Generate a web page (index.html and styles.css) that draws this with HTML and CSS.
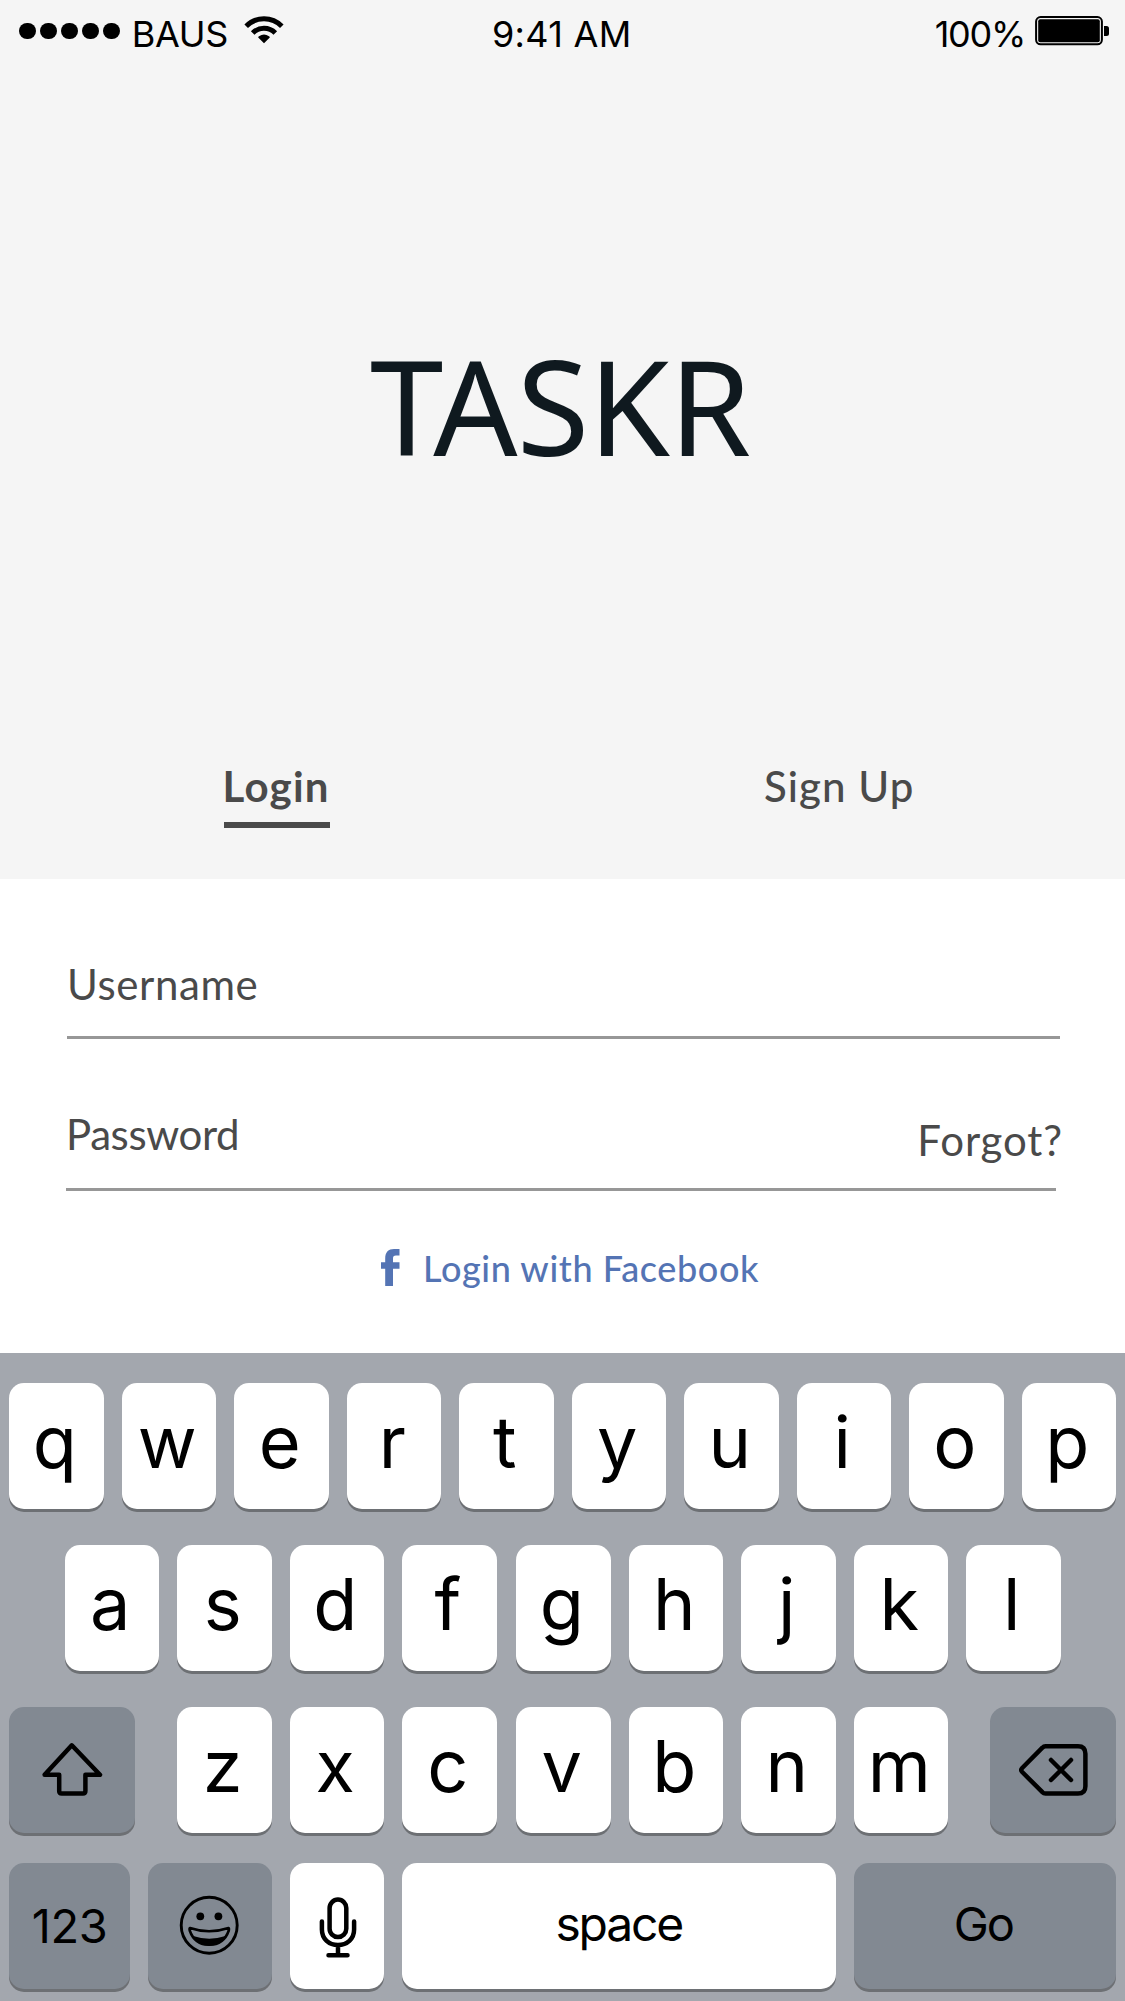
FILE: index.html
```
<!DOCTYPE html>
<html lang="en">
<head>
<meta charset="utf-8">
<title>Taskr</title>
<link rel="stylesheet" href="styles.css">
</head>
<body>
<header class="hero">
  <div class="status">
    <div class="status-left">
      <div class="signal"><i></i><i></i><i></i><i></i><i></i></div>
      <span class="carrier">BAUS</span>
      <svg class="wifi" width="40" height="28" viewBox="0 0 40 28" fill="none" stroke="#000" stroke-width="5">
        <path d="M2.2 10.2a25 25 0 0 1 35.6 0M8.7 17a15.800 15.800 0 0 1 22.6 0"/>
        <path d="M20 27.300l-5.800-5.800q0-.8.800-1.300a8.600 8.600 0 0 1 10 0q.8.500.8 1.300z" fill="#000" stroke="none"/>
      </svg>
    </div>
    <span class="time">9:41 AM</span>
    <div class="status-right">
      <span class="percent">100%</span>
      <svg class="battery" width="75" height="30" viewBox="0 0 75 30">
        <rect x="1.1" y="1.1" width="65.800" height="27.200" rx="4.500" fill="none" stroke="#000" stroke-width="2"/>
        <rect x="3.200" y="3.200" width="61.600" height="23" rx="2"/>
        <path d="M69 10h2.500q2.500 0 2.500 2.500v5q0 2.500-2.500 2.500H69z"/>
      </svg>
    </div>
  </div>
  <h1 class="brand">TASKR</h1>
  <nav class="tabs">
    <a class="tab active">Login</a>
    <a class="tab signup">Sign Up</a>
  </nav>
</header>
<main class="form">
  <div class="field username"><span>Username</span></div>
  <div class="field password"><span>Password</span><a class="forgot">Forgot?</a></div>
  <a class="facebook">
    <svg width="19" height="38" viewBox="0 0 19 38" fill="#5474b4"><path d="M4.200 37V19.700H0v-6.500h4.200V9.500C4.200 3.100 7.500 0 13 0h5.500V6.500h-3.500c-2.300 0-3 1-3 3.200v3.500h6.500v6.500H12v17.300z"/></svg>
    <span>Login with Facebook</span>
  </a>
</main>
<section class="keyboard">
  <div class="row">
    <b class="key">q</b><b class="key">w</b><b class="key">e</b><b class="key">r</b><b class="key">t</b><b class="key">y</b><b class="key">u</b><b class="key">i</b><b class="key">o</b><b class="key">p</b>
  </div>
  <div class="row home">
    <b class="key">a</b><b class="key">s</b><b class="key">d</b><b class="key">f</b><b class="key mid">g</b><b class="key">h</b><b class="key">j</b><b class="key">k</b><b class="key">l</b>
  </div>
  <div class="row lower">
    <b class="key dark shift"><svg width="126" height="126" viewBox="0 0 126 126" fill="none" stroke="#000" stroke-width="4.500" stroke-linejoin="round"><path d="M62.800 38.300L91 67.800H76.400V84Q76.400 86.500 73.900 86.500H52.700Q50.200 86.500 50.200 84V67.800H35.600Z"/></svg></b>
    <b class="key">z</b><b class="key">x</b><b class="key">c</b><b class="key mid">v</b><b class="key">b</b><b class="key">n</b><b class="key">m</b>
    <b class="key dark delete"><svg width="126" height="126" viewBox="0 0 126 126" fill="none" stroke="#000" stroke-width="4.500" stroke-linecap="round" stroke-linejoin="round"><path d="M55.500 39.300H88Q95.400 39.300 95.400 46.700V79.200Q95.400 86.600 88 86.600H55.500Q53.700 86.600 52.400 85.200L32.200 65Q30.300 63 32.200 61L52.400 40.700Q53.700 39.300 55.500 39.300ZM61 53L81 73M81 53L61 73"/></svg></b>
  </div>
  <div class="row bottom">
    <b class="key dark numbers">123</b>
    <b class="key dark"><svg width="123" height="126" viewBox="0 0 123 126"><circle cx="61.200" cy="62.200" r="28" fill="none" stroke="#000" stroke-width="2.900"/><circle cx="52.300" cy="53.300" r="3.900"/><circle cx="70.400" cy="53.300" r="3.900"/><path d="M42 65Q61 71.500 80.500 65Q81.300 65.200 80.800 67.500C77.500 77 71 81.700 61.200 81.700C51.500 81.700 45 77 41.700 67.500Q41.200 65.200 42 65Z" fill="none" stroke="#000" stroke-width="2.600" stroke-linejoin="round"/><path d="M44 72.800Q61.200 78.500 78.500 72.800C74 80 68 82.800 61.200 82.800C54 82.800 48 80 44 72.800Z"/></svg></b>
    <b class="key"><svg width="94" height="126" viewBox="0 0 94 126" fill="none" stroke="#000" stroke-width="4.500" stroke-linecap="round"><rect x="39.600" y="36.600" width="16.700" height="37.500" rx="8.350"/><path d="M31.900 58.500V66.500C31.900 76 39 82 48 82S64.100 76 64.100 66.500V58.500M48 82V92.300M38.500 92.300H57.500"/></svg></b>
    <b class="key space">space</b>
    <b class="key dark go">Go</b>
  </div>
</section>
</body>
</html>
```
FILE: styles.css
```
* { box-sizing: border-box; }
body {
  margin: 0;
  width: 1125px;
  height: 2001px;
  display: flex;
  flex-direction: column;
  overflow: hidden;
  background: #fff;
  color: #4a4a4a;
  font-family: Lato, sans-serif;
}
svg { display: block; flex: none; }

.hero { height: 879px; background: #f5f5f5; }
.status {
  height: 68px;
  padding: 0 15px 0 19px;
  display: grid;
  grid-template-columns: 473px 1fr auto;
  color: #000;
  font: 36px/68px Inter, sans-serif;
}
.status-left, .status-right { display: flex; }
.signal { display: flex; gap: 4.200px; padding-top: 22.500px; }
.signal i { width: 16.800px; height: 16.800px; border-radius: 50%; background: #000; }
.carrier { margin-left: 12px; letter-spacing: -0.300px; }
.wifi { margin: 16px 0 0 16px; }
.time { letter-spacing: 0.300px; }
.percent { letter-spacing: -1.300px; }
.battery { margin: 15.500px 0 0 10px; }

.brand {
  margin: 247px 0 0;
  padding-left: 370px;
  font: 400 132px/180px "Noto Sans", sans-serif;
  letter-spacing: -0.900px;
  color: #0f191f;
}
.tabs {
  margin-top: 266px;
  padding: 0 210.500px 0 223.500px;
  display: flex;
  justify-content: space-between;
}
.tab { font-size: 42px; line-height: 50px; font-weight: 500; letter-spacing: 1.100px; }
.tab.active {
  width: 106px;
  padding-bottom: 11px;
  border-bottom: 6px solid #4a4a4a;
  font-weight: 700;
  letter-spacing: 1.200px;
  text-indent: -1px;
}

.form { height: 474px; padding-top: 80px; font-size: 42px; line-height: 50px; }
.field { display: flex; justify-content: space-between; border-bottom: 3px solid #979797; }
.username { height: 80px; margin: 0 65px 0 67px; letter-spacing: 0.600px; }
.password { height: 82px; margin: 70px 69px 0 66px; letter-spacing: -0.400px; }
.forgot { margin: 6px -7px 0 0; letter-spacing: 0.900px; }
.facebook {
  margin: 55px 0 0 381px;
  display: flex;
  align-items: center;
  gap: 23px;
  color: #5474b4;
  font-size: 36px;
  line-height: 44px;
  font-weight: 500;
  letter-spacing: 0.600px;
}

.keyboard {
  flex: 1;
  padding: 30px 9px 0;
  display: flex;
  flex-direction: column;
  gap: 36px;
  background: #a3a7ae;
  font-family: Inter, sans-serif;
}
.row { display: flex; gap: 18px; }
.home { padding-left: 55.500px; }
.bottom { margin-top: -6px; }
.key {
  flex: none;
  width: 94.500px;
  height: 126px;
  padding-right: 3px;
  border-radius: 15px;
  background: #fff;
  box-shadow: 0 3px #6d7074;
  color: #000;
  font-size: 72px;
  font-weight: 400;
  line-height: 117px;
  text-align: center;
}
.mid { margin-left: 1.500px; }
.dark { background: #828992; }
.shift { width: 126px; margin-right: 24px; }
.delete { width: 126px; margin-left: 24px; }
.bottom .dark { width: 123.500px; }
.bottom .numbers { width: 121px; font-size: 47px; line-height: 125px; letter-spacing: -0.400px; padding: 0; }
.space { width: 433.500px; font-size: 48px; line-height: 121px; letter-spacing: -2.200px; padding: 0; }
.bottom .go { width: 262.500px; font-size: 47px; line-height: 121px; letter-spacing: -2px; padding: 0 3px 0 0; }
```
